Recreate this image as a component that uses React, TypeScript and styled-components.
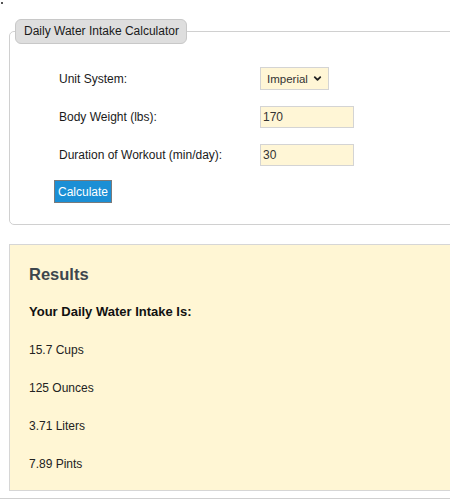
import {createGlobalStyle} from "styled-components";
import styled from "styled-components";
import {ChevronDown} from "lucide-react";

const GlobalStyle = createGlobalStyle`
    body {
        margin: 0;
        overflow: hidden;
        font-family: "Liberation Sans", Arial, sans-serif;
        color: #222;
        background: #fff;
    }
`

const PageDiv = styled.div`
    width: 520px;
    display: flex;
    flex-direction: column;
`

const Dot = styled.div`
    width: 2px;
    height: 2px;
    margin: 2px 0 0 1px;
    background: #555;
`

const CalcFieldset = styled.fieldset`
    margin: 15px 0 0 9px;
    padding: 0 0 21px 0;
    border: 1px solid #d0d0d0;
    border-radius: 5px;
`

const CalcLegend = styled.legend`
    margin-left: 5px;
    padding: 3px 7px 4px 8px;
    font-size: 12px;
    line-height: 16px;
    background: #dedede;
    border: 1px solid #c8c8c8;
    border-radius: 6px;
    color: #1a1a1a;
`

const FormGrid = styled.div`
    display: grid;
    grid-template-columns: 201px auto;
    row-gap: 16px;
    padding: 23px 0 0 49px;
    align-items: center;
    justify-items: start;
`

const Label = styled.label`
    font-size: 12px;
    color: #1a1a1a;
`

const SelectWrap = styled.div`
    position: relative;
    display: flex;
    align-items: center;
`

const StyledSelect = styled.select`
    appearance: none;
    box-sizing: border-box;
    width: 69px;
    height: 23px;
    padding: 0 0 0 6px;
    font: 11.5px "Liberation Sans", Arial, sans-serif;
    color: #333;
    background: #fff6d6;
    border: 1px solid #d4d4d4;
    border-radius: 0;
    outline: none;
`

const Arrow = styled.span`
    position: absolute;
    right: 6px;
    top: 6px;
    display: flex;
    pointer-events: none;
    color: #222;
`

const StyledInput = styled.input`
    box-sizing: border-box;
    width: 94px;
    height: 22px;
    padding: 0 2px;
    font: 12px "Liberation Sans", Arial, sans-serif;
    color: #333;
    background: #fff6d6;
    border: 1px solid #d4d4d4;
    outline: none;
`

const CalcButton = styled.button`
    box-sizing: border-box;
    margin: 14px 0 0 44px;
    align-self: flex-start;
    height: 23px;
    padding: 0 3px;
    font: 12px "Liberation Sans", Arial, sans-serif;
    color: #fff;
    background: #1b8fd5;
    border: 1px solid #7a7a7a;
    border-radius: 0;
`

const ResultsBox = styled.div`
    margin: 19px 0 0 9px;
    padding: 18px 20px 18px 19px;
    background: #fff6d4;
    border: 1px solid #d6d6d6;
    display: flex;
    flex-direction: column;
    gap: 22px;
`

const ResultsTitle = styled.h2`
    margin: 0 0 -3px 0;
    font-size: 16.5px;
    line-height: 22px;
    color: #3d464d;
`

const ResultLine = styled.p<{ $bold?: boolean }>`
    margin: 0;
    font-size: ${(p) => (p.$bold ? "13px" : "12px")};
    line-height: 16px;
    font-weight: ${(p) => (p.$bold ? "bold" : "normal")};
    color: ${(p) => (p.$bold ? "#111" : "#222")};
`

const BottomRule = styled.div`
    margin-top: 7px;
    border-top: 1px solid #d0d0d0;
    height: 10px;
`

const results = ["15.7 Cups", "125 Ounces", "3.71 Liters", "7.89 Pints"]

export default function App() {
    return (
        <PageDiv>
            <GlobalStyle/>
            <Dot/>
            <CalcFieldset>
                <CalcLegend>Daily Water Intake Calculator</CalcLegend>
                <FormGrid>
                    <Label>Unit System:</Label>
                    <SelectWrap>
                        <StyledSelect defaultValue="imperial">
                            <option value="imperial">Imperial</option>
                            <option value="metric">Metric</option>
                        </StyledSelect>
                        <Arrow><ChevronDown size={11} strokeWidth={4}/></Arrow>
                    </SelectWrap>
                    <Label>Body Weight (lbs):</Label>
                    <StyledInput type="text" defaultValue="170"/>
                    <Label>Duration of Workout (min/day):</Label>
                    <StyledInput type="text" defaultValue="30"/>
                </FormGrid>
                <CalcButton>Calculate</CalcButton>
            </CalcFieldset>
            <ResultsBox>
                <ResultsTitle>Results</ResultsTitle>
                <ResultLine $bold>Your Daily Water Intake Is:</ResultLine>
                {results.map((r) => (
                    <ResultLine key={r}>{r}</ResultLine>
                ))}
            </ResultsBox>
            <BottomRule/>
        </PageDiv>
    )
}
